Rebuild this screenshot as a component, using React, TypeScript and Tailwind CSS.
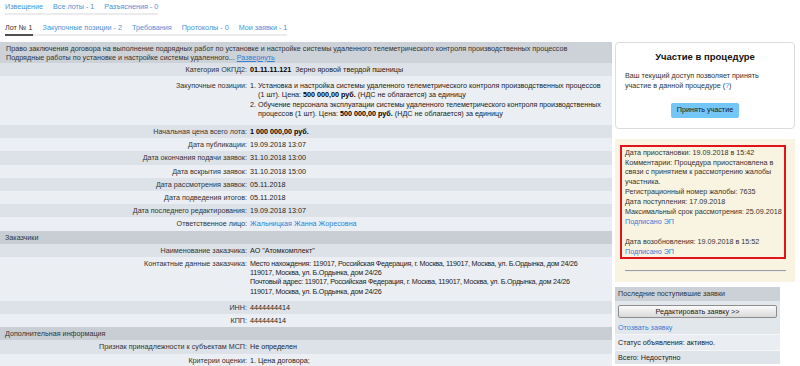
import type { ReactNode } from 'react';

const LINK = 'text-[#2f7fd6]';

function Row({
  label,
  children,
  dark,
  pad = 'py-[2px]',
}: {
  label: string;
  children: ReactNode;
  dark?: boolean;
  pad?: string;
}) {
  return (
    <div className={`grid grid-cols-[250px_1fr] ${dark ? 'bg-[#dde2e9]' : 'bg-[#ebeef2]'}`}>
      <div className={`text-right pr-[3px] text-[#333] ${pad}`}>{label}:</div>
      <div className={`text-[#222] ${pad}`}>{children}</div>
    </div>
  );
}

function Section({ title }: { title: string }) {
  return <div className="bg-[#c9ced5] pl-[5px] py-[2px] text-[#333]">{title}</div>;
}

function Tabs({ items, active, className }: { items: string[]; active?: number; className: string }) {
  return (
    <div className={`ml-[5px] flex w-fit gap-[10px] border-b-2 border-[#ebebeb] ${className}`}>
      {items.map((t, i) => (
        <span
          key={t}
          className={`-mb-[2px] border-b-2 leading-[10px] ${
            i === active ? 'border-[#505050] text-[#333]' : 'border-transparent text-[#4a92d6]'
          }`}
        >
          {t}
        </span>
      ))}
    </div>
  );
}

export default function App() {
  return (
    <div className="h-[366px] w-[800px] overflow-hidden bg-white font-['Liberation_Sans',Arial,sans-serif] text-[7.2px] leading-[9.2px] text-[#222]">
      {/* Tabs */}
      <Tabs items={['Извещение', 'Все лоты - 1', 'Разъяснения - 0']} className="pt-[1.5px] [&>span]:pb-[1.5px]" />
      <Tabs
        items={['Лот № 1', 'Закупочные позиции - 2', 'Требования', 'Протоколы - 0', 'Мои заявки - 1']}
        active={0}
        className="mt-[8px] [&>span]:pb-[1px]"
      />

      <div className="mt-[6px] flex">
        {/* Lot table */}
        <div className="w-[612px] shrink-0">
          <div className="bg-[#cdd1d8] pl-[6px] pt-[1.5px] pb-[1px] text-[#333]">
            Право заключения договора на выполнение подрядных работ по установке и настройке системы удаленного
            телеметрического контроля производственных процессов
            <br />
            Подрядные работы по установке и настройке системы удаленного...{' '}
            <span className={`${LINK} underline`}>Развернуть</span>
          </div>
          <Row label="Категория ОКПД2" dark>
            <b className="text-black">01.11.11.121</b>&nbsp; Зерно яровой твердой пшеницы
          </Row>
          <Row label="Закупочные позиции" pad="pt-[5px] pb-[7px]">
            <ol className="list-decimal pl-[8px] whitespace-nowrap">
              <li>
                Установка и настройка системы удаленного телеметрического контроля производственных процессов
                <br />
                (1 шт). Цена: <b className="text-black">500 000,00 руб.</b> (НДС не облагается) за единицу
              </li>
              <li>
                <span className="tracking-[-0.05px]">
                  Обучение персонала эксплуатации системы удаленного телеметрического контроля производственных
                </span>
                <br />
                процессов (1 шт). Цена: <b className="text-black">500 000,00 руб.</b> (НДС не облагается) за единицу
              </li>
            </ol>
          </Row>
          <Row label="Начальная цена всего лота" dark>
            <b className="text-black">1 000 000,00 руб.</b>
          </Row>
          <Row label="Дата публикации">19.09.2018 13:07</Row>
          <Row label="Дата окончания подачи заявок" dark>
            31.10.2018 13:00
          </Row>
          <Row label="Дата вскрытия заявок">31.10.2018 15:00</Row>
          <Row label="Дата рассмотрения заявок" dark>
            05.11.2018
          </Row>
          <Row label="Дата подведения итогов">05.11.2018</Row>
          <Row label="Дата последнего редактирования" dark>
            19.09.2018 13:07
          </Row>
          <Row label="Ответственное лицо">
            <span className={LINK}>Жальницкая Жанна Жоресовна</span>
          </Row>

          <Section title="Заказчики" />
          <Row label="Наименование заказчика" dark>
            АО "Атомкомплект"
          </Row>
          <Row label="Контактные данные заказчика" pad="pt-[2px] pb-[5px]">
            <div className="whitespace-nowrap tracking-[-0.25px]">
              Место нахождения: 119017, Российская Федерация, г. Москва, 119017, Москва, ул. Б.Ордынка, дом 24/26
              <br />
              119017, Москва, ул. Б.Ордынка, дом 24/26
              <br />
              Почтовый адрес: 119017, Российская Федерация, г. Москва, 119017, Москва, ул. Б.Ордынка, дом 24/26
              <br />
              119017, Москва, ул. Б.Ордынка, дом 24/26
            </div>
          </Row>
          <Row label="ИНН" dark>
            4444444414
          </Row>
          <Row label="КПП">444444414</Row>

          <Section title="Дополнительная информация" />
          <Row label="Признак принадлежности к субъектам МСП" dark>
            Не определен
          </Row>
          <Row label="Критерии оценки">1. Цена договора;</Row>
        </div>

        {/* Sidebar */}
        <div className="ml-[3px] flex w-[180px] shrink-0 flex-col">
          <div className="rounded-[4px] border border-[#dcdcdc] bg-white px-[9px] pt-[8px] pb-[10px]">
            <div className="text-center text-[9.5px] leading-[12px] font-bold text-[#111]">Участие в процедуре</div>
            <div className="mt-[8px] leading-[10.3px] text-[#333]">
              Ваш текущий доступ позволяет принять
              <br />
              участие в данной процедуре (<span className={LINK}>?</span>)
            </div>
            <div className="mt-[11px] flex justify-center">
              <button className="h-[15px] w-[68px] rounded-[2px] bg-[#73c6f5] text-[#1a1a1a]">Принять участие</button>
            </div>
          </div>

          <div className="mt-[10px] bg-[#f9f4e1] pt-[6px] pb-[10px]">
            <div className="ml-[5px] mr-[9px] border-2 border-[#e3131b] pl-[3px] pt-[1px] leading-[9.9px] whitespace-nowrap text-[#333]">
              Дата приостановки: 19.09.2018 в 15:42
              <br />
              Комментарии: Процедура приостановлена в
              <br />
              связи с принятием к рассмотрению жалобы
              <br />
              участника.
              <br />
              Регистрационный номер жалобы: 7635
              <br />
              Дата поступления: 17.09.2018
              <br />
              Максимальный срок рассмотрения: 25.09.2018
              <br />
              <span className={LINK}>Подписано ЭП</span>
              <br />
              <br />
              Дата возобновления: 19.09.2018 в 15:52
              <br />
              <span className={LINK}>Подписано ЭП</span>
            </div>
            <div className="mt-[11px] ml-[10px] mr-[9px] border-t border-b border-t-[#9c9c9c] border-b-[#ececec]" />
          </div>

          <div className="mt-[5px] w-[165px] bg-[#e2e7ec]">
            <div className="bg-[#ccd1d8] pl-[3px] leading-[14px] text-[#333]">Последние поступившие заявки</div>
            <button className="mx-[3px] mt-[4px] block h-[13px] w-[159px] rounded-[2px] border border-[#8d8d8d] bg-linear-to-b from-[#fbfbfb] to-[#d9d9d9] text-center leading-[11px] text-[#1a1a1a]">
              Редактировать заявку &gt;&gt;
            </button>
            <div className={`pl-[3px] pt-[5px] pb-[1px] leading-[10px] ${LINK}`}>Отозвать заявку</div>
            <div className="border-t border-[#f4f6f8] bg-[#eaedf1] pl-[3px] leading-[15px] text-[#222]">
              Статус объявления: активно.
            </div>
            <div className="border-t border-[#f4f6f8] bg-[#dfe4ea] pl-[3px] leading-[13px] text-[#222]">
              Всего: Недоступно
            </div>
          </div>
        </div>
      </div>
    </div>
  );
}
